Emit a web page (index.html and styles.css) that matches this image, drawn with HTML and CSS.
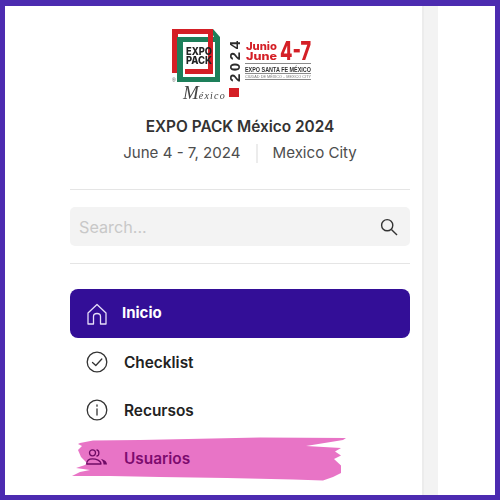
FILE: index.html
```html
<!DOCTYPE html>
<html lang="es">
<head>
<meta charset="utf-8">
<title>EXPO PACK México 2024</title>
<link rel="stylesheet" href="styles.css">
</head>
<body>
<div class="frame">
  <aside class="sidebar">
    <svg class="logo" viewBox="0 0 160 78" width="160" height="78" aria-label="Expo Pack México 2024">
      <path class="red" d="M2 3H43V8H8V47H2Z"/>
      <path class="green" d="M7 11H50V56H7ZM13 16V51H45V16Z" fill-rule="evenodd"/>
      <path class="green" d="M43 3L50 11H44L43 9Z"/>
      <path class="red" d="M38 3H43V48H15V43H38Z"/>
      <text class="expo" x="16" y="29" textLength="26" lengthAdjust="spacingAndGlyphs">EXPO</text>
      <text class="expo" x="16" y="38" textLength="26" lengthAdjust="spacingAndGlyphs">PACK</text>
      <text class="reg" x="2" y="56">®</text>
      <text class="mexico" x="13" y="73"><tspan class="mexico-m">M</tspan>éxico</text>
      <rect class="red" x="59" y="62" width="10" height="9"/>
      <text class="year" transform="translate(70 56) rotate(-90)" textLength="41" lengthAdjust="spacing">2024</text>
      <text class="junio" x="76" y="24" textLength="31" lengthAdjust="spacingAndGlyphs">Junio</text>
      <text class="junio" x="76" y="34" textLength="31" lengthAdjust="spacingAndGlyphs">June</text>
      <text class="dates" x="110" y="34" textLength="31" lengthAdjust="spacingAndGlyphs">4-7</text>
      <rect class="rule" x="75" y="37" width="66" height="1"/>
      <text class="venue" x="75" y="45.5" textLength="66" lengthAdjust="spacingAndGlyphs">EXPO SANTA FE MÉXICO</text>
      <rect class="rule" x="75" y="47" width="66" height="1"/>
      <text class="city" x="75" y="52" textLength="66" lengthAdjust="spacingAndGlyphs">CIUDAD DE MÉXICO – MEXICO CITY</text>
      <rect class="rule" x="75" y="53" width="66" height="1"/>
    </svg>
    <h1 class="title">EXPO PACK México 2024</h1>
    <div class="meta">
      <span>June 4 - 7, 2024</span>
      <span class="meta-sep"></span>
      <span>Mexico City</span>
    </div>
    <div class="search-wrap">
      <div class="search">
        <span class="placeholder">Search...</span>
        <svg class="search-icon" viewBox="0 0 18 18" width="18" height="18"><circle cx="7.2" cy="7.2" r="5.6"/><path d="M11.4 11.4L17 17"/></svg>
      </div>
    </div>
    <nav class="nav">
      <a class="item active">
        <svg class="icon" viewBox="0 0 20 22" width="20" height="22"><path d="M1 10L10 1.500L19 10V21H13.500V13.500C13.500 11.500 12 10.500 10 10.500C8 10.500 6.500 11.500 6.500 13.500V21H1Z"/></svg>
        <span class="label label-active">Inicio</span>
      </a>
      <a class="item">
        <svg class="icon" viewBox="0 0 22 22" width="22" height="22"><circle cx="11" cy="11" r="9.800"/><path d="M6.500 11.500L9.800 14.500L15.800 8"/></svg>
        <span class="label">Checklist</span>
      </a>
      <a class="item">
        <svg class="icon" viewBox="0 0 22 22" width="22" height="22"><circle cx="11" cy="11" r="9.800"/><path d="M11 10V16"/><path d="M11 6V7.200"/></svg>
        <span class="label">Recursos</span>
      </a>
      <a class="item item-brush">
        <svg class="brush" viewBox="0 0 300 50" width="300" height="50"><path d="M20 6L33 3.500L80 3L200 0.500L286 1L283 3L246 9L281 11L275 14.500L281 18.500L274 22L281 28.500L281 36L273 40L263 43.500L233 42.500L167 41L100 40L50 39L12 39L20 35L30 33L16 31L25 28L27 26L21 20L18 13L22 9L18 7Z"/></svg>
        <svg class="icon icon-users" viewBox="0 0 22 16" width="22" height="16"><circle cx="6.500" cy="3.800" r="3"/><path d="M0.700 15C0.700 11.500 3 9.800 6.500 9.800C10 9.800 15 11.500 15 15Z"/><path d="M11 1C13.500 1.500 13.500 6.500 11 7"/><path class="users-fill" d="M15 10C18 10.500 21 12.500 21 15.500H17.500C17.500 13 16.500 11.500 15 10Z"/></svg>
        <span class="label label-brush">Usuarios</span>
      </a>
    </nav>
  </aside>
  <div class="rail"></div>
  <div class="rest"></div>
</div>
</body>
</html>
```
FILE: styles.css
```css
* { box-sizing: border-box; }
html, body { margin: 0; height: 100%; background: #fff; }
body { font-family: Inter, "Liberation Sans", sans-serif; }

.frame {
  width: 500px;
  height: 500px;
  display: flex;
  overflow: hidden;
  border: 5px solid #4c2bb0;
  border-top-width: 6px;
  background: #fff;
}

.sidebar {
  width: 417px;
  padding: 20px 12px 0 65px;
  display: flex;
  flex-direction: column;
  align-items: stretch;
  flex: none;
}

.rail {
  width: 16px;
  flex: none;
  background: #f3f3f3;
  border-left: 2px solid #ececec;
}
.rest { flex: 1; }

.logo { display: block; margin: 0 0 0 100px; filter: blur(0.35px); }
.red { fill: #d41f26; }
.green { fill: #1d7f5a; }
.rule { fill: #8a8a8a; }
.expo { font: 800 10.500px Inter, sans-serif; fill: #222; }
.reg { font: 5px "Liberation Sans", sans-serif; fill: #555; }
.mexico { font: italic 10px "Liberation Serif", serif; letter-spacing: 1.200px; fill: #444; }
.mexico-m { font-size: 19px; letter-spacing: 0; }
.year { font: 700 15px "Liberation Sans", sans-serif; fill: #2c2c2c; }
.junio { font: 800 11px Inter, sans-serif; fill: #d41f26; }
.dates { font: 800 26px Inter, sans-serif; fill: #d41f26; }
.venue { font: 700 6.500px "Liberation Sans", sans-serif; fill: #333; }
.city { font: 4px "Liberation Sans", sans-serif; fill: #777; }

.title {
  margin: 13px 0 0;
  font-size: 15.400px;
  line-height: 20px;
  font-weight: 600;
  color: #333;
  text-align: center;
}

.meta {
  margin-top: 6px;
  display: flex;
  justify-content: center;
  align-items: center;
  gap: 15px;
  font-size: 15.100px;
  line-height: 20px;
  color: #4d4d4d;
}
.meta-sep { width: 2px; height: 19px; background: #ececec; }

.search-wrap {
  margin-top: 26px;
  padding: 17px 0;
  border-top: 1px solid #e5e5e5;
  border-bottom: 1px solid #e5e5e5;
}
.search {
  height: 39px;
  padding: 0 12px 0 9px;
  background: #f3f3f3;
  border-radius: 5px;
  display: flex;
  align-items: center;
  justify-content: space-between;
}
.placeholder { font-size: 16.200px; color: #c8c8c8; }
.search-icon { fill: none; stroke: #333; stroke-width: 1.400; }

.nav { margin-top: 25px; display: flex; flex-direction: column; }
.item {
  position: relative;
  height: 48px;
  padding-left: 16px;
  display: flex;
  align-items: center;
  gap: 16px;
  color: #222;
}
.active { height: 49px; background: #330e97; border-radius: 8px; color: #fff; gap: 15px; padding-left: 17px; }
.icon { fill: none; stroke: #333; stroke-width: 1.300; stroke-linecap: round; stroke-linejoin: round; flex: none; position: relative; }
.active .icon { stroke: #e6def8; }
.label { font-size: 15.400px; font-weight: 600; position: relative; }
.label-active { font-weight: 700; top: -1px; font-size: 15px; }
.label-brush { color: #7d0b6f; }
.icon-users { stroke: #6f0b66; margin-top: -2px; }
.users-fill { fill: #6f0b66; stroke: none; }
.brush { position: absolute; left: -10px; top: 3px; fill: #e874c6; }
```
